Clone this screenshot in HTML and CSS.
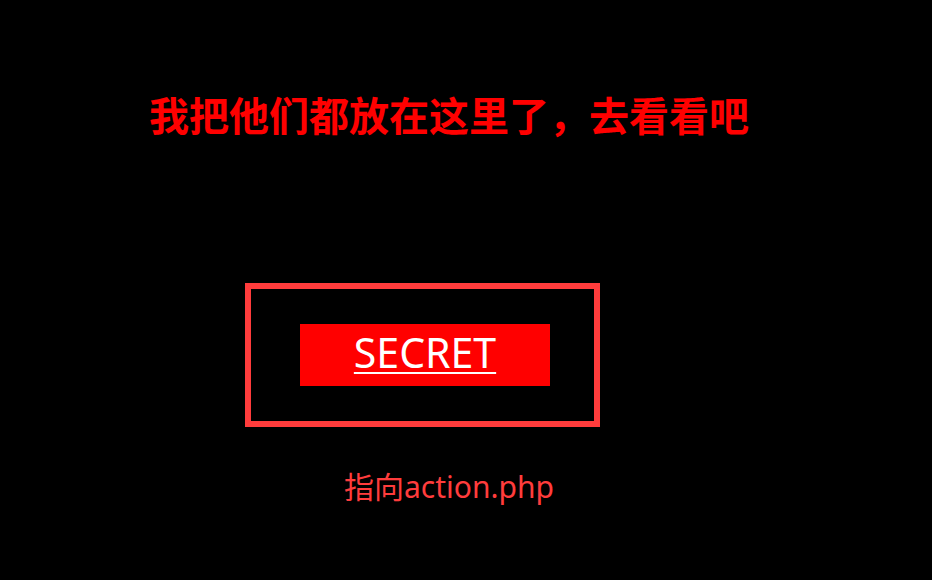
FILE: index.html
```html
<!DOCTYPE html>
<html lang="zh-CN">
<head>
<meta charset="utf-8">
<title>SECRET</title>
<link rel="stylesheet" href="styles.css">
</head>
<body>
<div class="page">
  <h1 class="title">我把他们都放在这里了，去看看吧</h1>
  <div class="frame">
    <a class="secret" href="action.php">SECRET</a>
  </div>
  <p class="hint">指向action.php</p>
</div>
</body>
</html>
```
FILE: styles.css
```css
html, body {
  margin: 0;
  padding: 0;
  background: #000;
  height: 100%;
}
.page {
  width: 898px;
  display: flex;
  flex-direction: column;
  font-family: "Noto Sans", "Noto Sans CJK SC", sans-serif;
}
.title {
  margin: 90px 0 0;
  text-align: center;
  color: #ff0000;
  font-family: "Noto Sans CJK SC", sans-serif;
  font-weight: 700;
  font-size: 40px;
  line-height: 48px;
}
.frame {
  margin: 145px 0 0 245px;
  width: 294px;
  height: 97px;
  border: 6px solid #ff3c3c;
  padding: 35px 0 0 49px;
  display: flex;
  align-items: flex-start;
}
.secret {
  width: 250px;
  height: 56px;
  padding-bottom: 6px;
  background: #ff0000;
  color: #fff;
  font-size: 41px;
  line-height: 56px;
  text-align: center;
  text-decoration: underline;
  text-decoration-thickness: 2px;
  text-underline-offset: 4px;
}
.hint {
  margin: 40px 0 0;
  text-align: center;
  color: #ff3c3c;
  font-size: 30px;
  line-height: 40px;
}
```
